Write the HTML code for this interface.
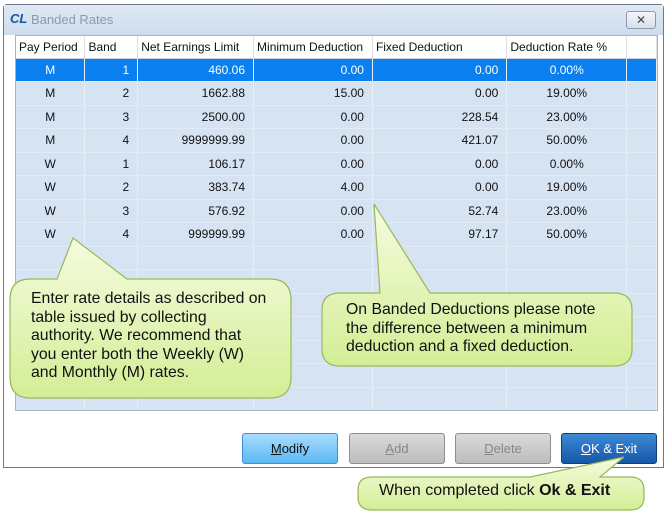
<!DOCTYPE html>
<html><head><style>
*{margin:0;padding:0;box-sizing:border-box}
body{width:670px;height:518px;background:#fff;position:relative;overflow:hidden;font-family:"Liberation Sans",sans-serif}
.win{position:absolute;left:3px;top:4px;width:661px;height:464px;border:1px solid #6d7a88;background:#fff;border-radius:4px 4px 0 0}
.tb{position:absolute;left:0;top:0;right:0;height:30px;background:linear-gradient(#dfe9f5,#cfdcec)}
.title{position:absolute;left:27px;top:7px;font-size:13px;color:#8a9ab0}
.logo{position:absolute;left:6px;top:6px;font:italic bold 13px "Liberation Sans",sans-serif;color:#1a56a8}
.close{position:absolute;left:622px;top:6px;width:30px;height:18px;border:1px solid #8b99aa;border-radius:3px;background:linear-gradient(#f4f7fb,#d6dfea);font-size:12px;color:#444;text-align:center;line-height:16px}
.grid{position:absolute;left:11px;top:30px;width:643px;height:376px;background:#d5e3f2;border:1px solid #a8b4c2;overflow:hidden}
table{border-collapse:collapse;font-size:12px;position:absolute;left:0;top:0;table-layout:fixed}
td{height:23.5px;border-right:1px solid #e8eef6;border-bottom:1px solid #e3ebf4;padding:0 8px;color:#111;white-space:nowrap;overflow:hidden}
tr.h td{background:#fff;height:22px;padding:0 3px;border-right:1px solid #e0e0e0;border-bottom:1px solid #c8d0da}
tr.s td{background:#0a7ff0;color:#fff}
.r{text-align:right}.c{text-align:center}
.btn{position:absolute;top:428px;width:96px;height:31px;border-radius:3px;font-size:13px;text-align:center;line-height:29px}
.note{position:absolute;font:15.8px "Liberation Sans",sans-serif;color:#111;line-height:18.5px;white-space:nowrap}
</style></head><body>
<div class="win">
<div class="tb"></div>
<div class="logo">CL</div>
<div class="title">Banded Rates</div>
<div class="close">✕</div>
<div class="grid">
<table>
<colgroup><col style="width:69px"><col style="width:53px"><col style="width:116px"><col style="width:119px"><col style="width:135px"><col style="width:120px"><col style="width:30px"></colgroup>
<tr class="h"><td>Pay Period</td><td>Band</td><td>Net Earnings Limit</td><td>Minimum Deduction</td><td>Fixed Deduction</td><td>Deduction Rate %</td><td></td></tr>
<tr class="s"><td class="c">M</td><td class="r">1</td><td class="r">460.06</td><td class="r">0.00</td><td class="r">0.00</td><td class="c">0.00%</td><td></td></tr>
<tr><td class="c">M</td><td class="r">2</td><td class="r">1662.88</td><td class="r">15.00</td><td class="r">0.00</td><td class="c">19.00%</td><td></td></tr>
<tr><td class="c">M</td><td class="r">3</td><td class="r">2500.00</td><td class="r">0.00</td><td class="r">228.54</td><td class="c">23.00%</td><td></td></tr>
<tr><td class="c">M</td><td class="r">4</td><td class="r">9999999.99</td><td class="r">0.00</td><td class="r">421.07</td><td class="c">50.00%</td><td></td></tr>
<tr><td class="c">W</td><td class="r">1</td><td class="r">106.17</td><td class="r">0.00</td><td class="r">0.00</td><td class="c">0.00%</td><td></td></tr>
<tr><td class="c">W</td><td class="r">2</td><td class="r">383.74</td><td class="r">4.00</td><td class="r">0.00</td><td class="c">19.00%</td><td></td></tr>
<tr><td class="c">W</td><td class="r">3</td><td class="r">576.92</td><td class="r">0.00</td><td class="r">52.74</td><td class="c">23.00%</td><td></td></tr>
<tr><td class="c">W</td><td class="r">4</td><td class="r">999999.99</td><td class="r">0.00</td><td class="r">97.17</td><td class="c">50.00%</td><td></td></tr>
<tr><td></td><td></td><td></td><td></td><td></td><td></td><td></td></tr>
<tr><td></td><td></td><td></td><td></td><td></td><td></td><td></td></tr>
<tr><td></td><td></td><td></td><td></td><td></td><td></td><td></td></tr>
<tr><td></td><td></td><td></td><td></td><td></td><td></td><td></td></tr>
<tr><td></td><td></td><td></td><td></td><td></td><td></td><td></td></tr>
<tr><td></td><td></td><td></td><td></td><td></td><td></td><td></td></tr>
<tr><td></td><td></td><td></td><td></td><td></td><td></td><td></td></tr>
</table>
</div>
<div class="btn" style="left:238px;background:linear-gradient(#a8dcff,#5cb8f4);border:1px solid #3c8fd8;color:#111"><u>M</u>odify</div>
<div class="btn" style="left:345px;background:linear-gradient(#dadada,#bdbdbd);border:1px solid #8e8e8e;color:#888"><u>A</u>dd</div>
<div class="btn" style="left:451px;background:linear-gradient(#dadada,#bdbdbd);border:1px solid #8e8e8e;color:#888"><u>D</u>elete</div>
<div class="btn" style="left:557px;background:linear-gradient(#3d8ad6,#1657a8);border:1px solid #123f7a;color:#fff"><u>O</u>K &amp; Exit</div>
</div>
<svg width="670" height="518" style="position:absolute;left:0;top:0">
<defs><linearGradient id="g" x1="0" y1="0" x2="0" y2="1"><stop offset="0" stop-color="#f6fbdf"/><stop offset="1" stop-color="#d3ee95"/></linearGradient></defs>
<path d="M30,279 H57 L73,238 L127,279 H270 Q291,279 291,300 V377 Q291,398 270,398 H30 Q10,398 10,377 V300 Q10,279 30,279 Z" fill="url(#g)" stroke="#98b85a" stroke-width="1.2"/>
<path d="M340,293 H380 L374,204 L430,293 H614 Q632,293 632,310 V349 Q632,366 614,366 H340 Q322,366 322,349 V310 Q322,293 340,293 Z" fill="url(#g)" stroke="#98b85a" stroke-width="1.2"/>
<path d="M372,477 H530 L624,457 L600,477 H630 Q644,477 644,490 V497 Q644,510 630,510 H372 Q358,510 358,497 V490 Q358,477 372,477 Z" fill="url(#g)" stroke="#98b85a" stroke-width="1.2"/>
</svg>
<div class="note" style="left:31px;top:290px">Enter rate details as described on<br>table issued by collecting<br>authority. We recommend that<br>you enter both the Weekly (W)<br>and Monthly (M) rates.</div>
<div class="note" style="left:346px;top:301px">On Banded Deductions please note<br>the difference between a minimum<br>deduction and a fixed deduction.</div>
<div class="note" style="left:379px;top:482px;font-size:16px">When completed click <b>Ok &amp; Exit</b></div>
</body></html>
